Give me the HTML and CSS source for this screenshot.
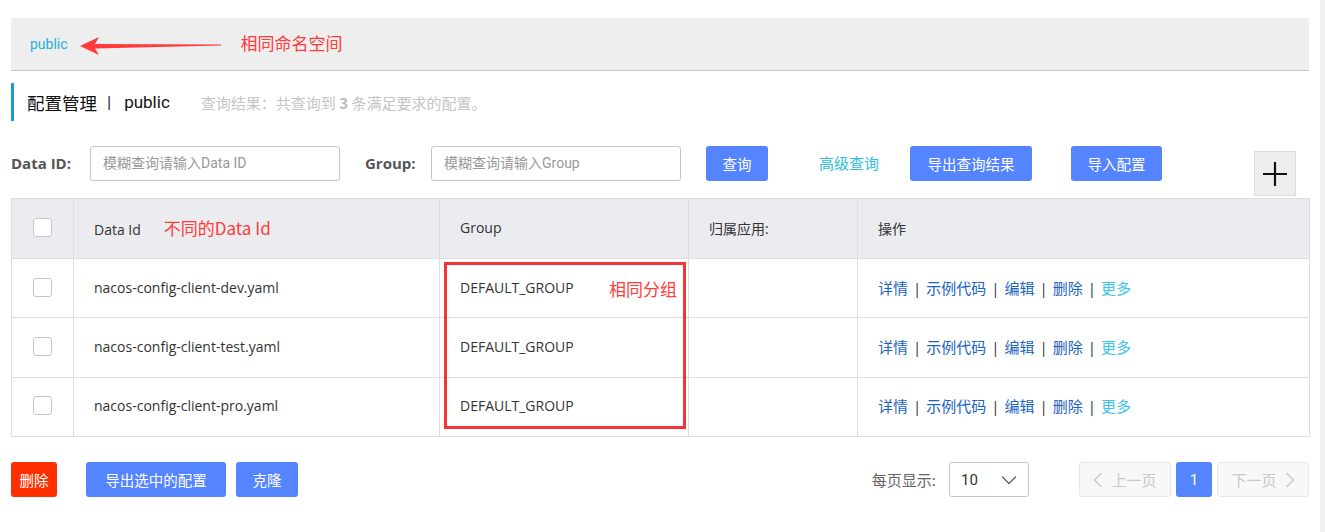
FILE: index.html
```html
<!DOCTYPE html>
<html lang="zh-CN">
<head>
<meta charset="utf-8">
<title>配置管理</title>
<link rel="stylesheet" href="styles.css">
</head>
<body>
<div class="page">
  <div class="main">
    <div class="ns-bar">
      <span class="ns-link">public</span>
      <svg class="arrow" width="142" height="20" viewBox="0 0 142 20">
        <polygon points="0,10 19,1 15,8 141,8.6 141,9.4 15,12.5 19,19" fill="#ff3b3b"/>
      </svg>
      <span class="note note-ns">相同命名空间</span>
    </div>

    <div class="title-row">
      <span class="title">配置管理</span>
      <span class="title-sep">|</span>
      <span class="title-ns">public</span>
      <span class="summary">查询结果：共查询到 <b>3</b> 条满足要求的配置。</span>
    </div>

    <div class="search-row">
      <label class="s-label">Data ID:</label>
      <div class="s-input">模糊查询请输入Data ID</div>
      <label class="s-label s-label-group">Group:</label>
      <div class="s-input">模糊查询请输入Group</div>
      <button class="btn btn-primary btn-query">查询</button>
      <span class="adv-link">高级查询</span>
      <button class="btn btn-primary btn-export">导出查询结果</button>
      <button class="btn btn-primary btn-import">导入配置</button>
      <div class="plus-btn">
        <svg width="26" height="26" viewBox="0 0 26 26"><path d="M13 1v24M1 13h24" stroke="#111" stroke-width="2.2" fill="none"/></svg>
      </div>
    </div>

    <div class="table-wrap">
      <table class="cfg-table">
        <colgroup>
          <col class="c-check"><col class="c-id"><col class="c-group"><col class="c-app"><col class="c-op">
        </colgroup>
        <thead>
          <tr>
            <th><span class="cb"></span></th>
            <th>Data Id<span class="note note-id">不同的Data Id</span></th>
            <th>Group</th>
            <th>归属应用:</th>
            <th>操作</th>
          </tr>
        </thead>
        <tbody>
          <tr class="r1">
            <td><span class="cb"></span></td>
            <td>nacos-config-client-dev.yaml</td>
            <td>DEFAULT_GROUP</td>
            <td></td>
            <td class="ops"><a>详情</a><i>|</i><a>示例代码</a><i>|</i><a>编辑</a><i>|</i><a>删除</a><i>|</i><a class="more">更多</a></td>
          </tr>
          <tr class="r2">
            <td><span class="cb"></span></td>
            <td>nacos-config-client-test.yaml</td>
            <td>DEFAULT_GROUP</td>
            <td></td>
            <td class="ops"><a>详情</a><i>|</i><a>示例代码</a><i>|</i><a>编辑</a><i>|</i><a>删除</a><i>|</i><a class="more">更多</a></td>
          </tr>
          <tr class="r3">
            <td><span class="cb"></span></td>
            <td>nacos-config-client-pro.yaml</td>
            <td>DEFAULT_GROUP</td>
            <td></td>
            <td class="ops"><a>详情</a><i>|</i><a>示例代码</a><i>|</i><a>编辑</a><i>|</i><a>删除</a><i>|</i><a class="more">更多</a></td>
          </tr>
        </tbody>
      </table>
      <div class="red-box"></div>
      <span class="note note-group">相同分组</span>
    </div>

    <div class="footer-row">
      <button class="btn btn-danger btn-del">删除</button>
      <button class="btn btn-primary btn-exp-sel">导出选中的配置</button>
      <button class="btn btn-primary btn-clone">克隆</button>
      <div class="spacer"></div>
      <span class="per-page">每页显示:</span>
      <div class="select">
        <span>10</span>
        <svg width="16" height="10" viewBox="0 0 16 10"><path d="M1 1.5l7 7 7-7" stroke="#666" stroke-width="1.4" fill="none"/></svg>
      </div>
      <div class="pager">
        <div class="pg pg-prev">
          <svg width="10" height="16" viewBox="0 0 10 16"><path d="M8.5 1l-7 7 7 7" stroke="#ccc" stroke-width="1.6" fill="none"/></svg>
          <span>上一页</span>
        </div>
        <div class="pg pg-cur">1</div>
        <div class="pg pg-next">
          <span>下一页</span>
          <svg width="10" height="16" viewBox="0 0 10 16"><path d="M1.5 1l7 7-7 7" stroke="#ccc" stroke-width="1.6" fill="none"/></svg>
        </div>
      </div>
    </div>
  </div>
  <div class="scroll-strip"></div>
</div>
</body>
</html>
```

FILE: styles.css
```css
* { box-sizing: border-box; }
html, body { margin: 0; padding: 0; background: #fff; }
body {
  font-family: Roboto, "Noto Sans CJK SC", sans-serif;
  font-size: 14px;
  color: #333;
  width: 1325px;
  height: 532px;
  overflow: hidden;
}
.page { display: flex; height: 532px; }
.main { width: 1320px; padding: 18px 11px 0 11px; }
.scroll-strip { flex: 1; background: #f1f1f1; }

/* namespace bar */
.ns-bar {
  height: 53px;
  background: #eeeeee;
  border-bottom: 1px solid #c8c8c8;
  display: flex;
  align-items: center;
  padding-left: 19px;
}
.ns-link { color: #1fb2d6; font-size: 14px; }
.arrow { margin-left: 12px; margin-top: 4px; display: block; }
.note { color: #ff3b3b; font-family: "Noto Sans CJK SC", sans-serif; font-size: 17px; }
.note-ns { margin-left: 19px; margin-top: -3px; }

/* title */
.title-row {
  margin-top: 12px;
  height: 38px;
  border-left: 3px solid #1b9ad6;
  display: flex;
  align-items: center;
  padding-left: 13px;
  color: #111;
}
.title { font-size: 17.5px; font-family: "Noto Sans CJK SC", sans-serif; }
.title-sep { font-size: 17px; margin: 0 13px 0 10px; color: #1a2a4a; }
.title-ns { font-size: 17px; }
.summary { margin-left: 31px; font-size: 15px; color: #c5c5c5; font-family: "Noto Sans CJK SC", sans-serif; }
.summary b { color: #bbb; }

/* search row */
.search-row {
  margin-top: 25px;
  display: flex;
  align-items: flex-start;
  height: 52px;
}
.s-label {
  font-family: "Open Sans", sans-serif;
  font-weight: bold;
  font-size: 15px;
  color: #555;
  line-height: 34px;
  width: 79px;
}
.s-label-group { margin-left: 25px; width: 66px; }
.s-input {
  width: 250px;
  height: 35px;
  border: 1px solid #c4c6cf;
  border-radius: 3px;
  padding-left: 12px;
  line-height: 33px;
  color: #999;
  font-size: 14px;
}
.btn {
  border: none;
  border-radius: 3px;
  height: 35px;
  color: #fff;
  font-family: "Noto Sans CJK SC", sans-serif;
  font-size: 14.5px;
  padding: 0;
  cursor: pointer;
}
.btn-primary { background: #5584ff; }
.btn-danger { background: #ff3000; }
.btn-query { width: 62px; margin-left: 25px; }
.adv-link { color: #2dc0e0; line-height: 34px; margin-left: 51px; font-size: 15px; font-family: "Noto Sans CJK SC", sans-serif; }
.btn-export { width: 122px; margin-left: 31px; }
.btn-import { width: 91px; margin-left: 39px; }
.plus-btn {
  margin-left: 92px;
  margin-top: 5px;
  width: 42px;
  height: 45px;
  background: #eeeeee;
  border: 1px solid #dcdcdc;
  display: flex;
  align-items: center;
  justify-content: center;
}

/* table */
.table-wrap { position: relative; }
.cfg-table {
  width: 1298px;
  border-collapse: collapse;
  table-layout: fixed;
  border: 1px solid #dcdee3;
}
.c-check { width: 62px; }
.c-id { width: 366px; }
.c-group { width: 249px; }
.c-app { width: 169px; }
.c-op { width: 452px; }
.cfg-table th, .cfg-table td {
  border: 1px solid #dcdee3;
  text-align: left;
  font-weight: normal;
  padding: 0 0 0 20px;
  font-family: "Open Sans", "Noto Sans CJK SC", sans-serif;
  font-size: 14px;
  color: #333;
  vertical-align: middle;
}
.cfg-table th { background: #ebecf0; height: 60px; padding-bottom: 2px; }
.cfg-table td { height: 59.4px; padding-bottom: 2px; }
.cfg-table th:first-child, .cfg-table td:first-child { padding-left: 21px; }
.cb {
  display: block;
  width: 19px;
  height: 19px;
  border: 1px solid #c4c6cf;
  border-radius: 3px;
  background: #fff;
}
.note-id { margin-left: 23px; font-family: "Noto Sans CJK SC", sans-serif; color: #ff3b3b; }
.cfg-table td.ops { font-size: 15px; }
.ops a { color: #1c63c4; font-family: "Noto Sans CJK SC", sans-serif; }
.ops i { font-style: normal; color: #333; margin: 0 5px; }
.ops a.more { color: #3cc3e6; }

.red-box {
  position: absolute;
  left: 433px;
  top: 64px;
  width: 242px;
  height: 167px;
  border: 3px solid #f43535;
}
.note-group {
  position: absolute;
  left: 598px;
  top: 78px;
}

/* footer */
.footer-row {
  margin-top: 25px;
  display: flex;
  align-items: center;
  height: 35px;
}
.btn-del { width: 46px; }
.btn-exp-sel { width: 140px; margin-left: 29px; }
.btn-clone { width: 62px; margin-left: 10px; }
.spacer { flex: 1; }
.per-page { color: #666; font-size: 15px; font-family: "Noto Sans CJK SC", sans-serif; }
.select {
  margin-left: 13px;
  width: 80px;
  height: 35px;
  border: 1px solid #c4c6cf;
  border-radius: 3px;
  display: flex;
  align-items: center;
  justify-content: space-between;
  padding: 0 11px 0 11px;
  font-size: 15px;
  color: #333;
}
.pager { display: flex; margin-left: 50px; }
.pg {
  height: 35px;
  border-radius: 3px;
  display: flex;
  align-items: center;
  justify-content: center;
  font-size: 15px;
}
.pg-prev, .pg-next {
  width: 92px;
  background: #f7f8fa;
  border: 1px solid #e6e7eb;
  color: #c8c8c8;
  font-family: "Noto Sans CJK SC", sans-serif;
  gap: 8px;
}
.pg-cur { width: 36px; background: #5584ff; color: #fff; margin: 0 5px; }
```
